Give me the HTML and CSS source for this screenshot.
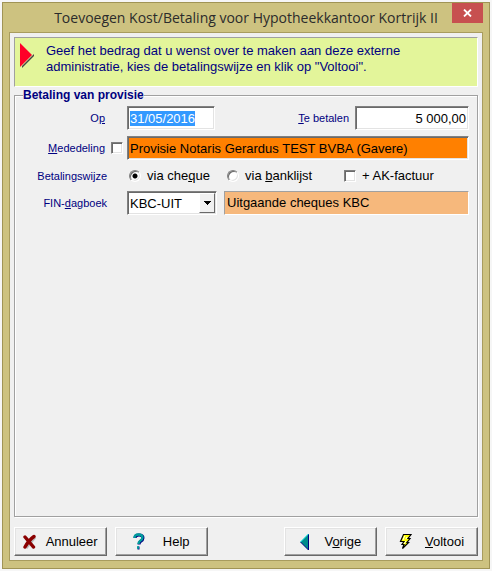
FILE: index.html
```html
<!DOCTYPE html>
<html lang="nl">

<head>
  <meta charset="UTF-8">
  <title>Toevoegen Kost/Betaling</title>
  <link rel="stylesheet" href="styles.css">
</head>

<body>
  <form class="window">
    <header class="titlebar">
      <h1>Toevoegen Kost/Betaling voor Hypotheekkantoor Kortrijk II</h1>
      <button type="button" class="close" aria-label="Sluiten">
        <svg width="9" height="8" viewBox="0 0 9 8"><path d="M1 0.5L8 7.5M8 0.5L1 7.5" stroke="#fff" stroke-width="1.8"/></svg>
      </button>
    </header>

    <main class="client">
      <div class="banner">
        <svg class="pointer" width="14" height="25" viewBox="0 0 14 25">
          <path d="M2 25L14 13V11L2 23z" fill="#444"/>
          <path d="M0 0L12 12L0 24z" fill="#ff0028"/>
        </svg>
        <p>Geef het bedrag dat u wenst over te maken aan deze externe administratie, kies de betalingswijze en klik op "Voltooi".</p>
      </div>

      <fieldset class="group">
        <legend>Betaling van provisie</legend>

        <div class="row">
          <label class="caption" for="datum">O<u>p</u></label>
          <input class="field date" type="text" id="datum" value="31/05/2016" autofocus>
          <label class="caption amount-label" for="bedrag"><u>T</u>e betalen</label>
          <input class="field amount" type="text" id="bedrag" value="5 000,00">
        </div>

        <div class="row">
          <label class="caption" for="metMededeling"><u>M</u>ededeling</label>
          <input class="check" type="checkbox" id="metMededeling">
          <input class="field message" type="text" value="Provisie Notaris Gerardus TEST BVBA (Gavere)" aria-label="Mededeling">
        </div>

        <div class="row options">
          <span class="caption wide">Betalingswijze</span>
          <label class="option cheque"><input class="radio" type="radio" name="wijze" checked><span>via che<u>q</u>ue</span></label>
          <label class="option bank"><input class="radio" type="radio" name="wijze"><span>via <u>b</u>anklijst</span></label>
          <label class="option"><input class="check" type="checkbox"><span>+ AK-factuur</span></label>
        </div>

        <div class="row">
          <label class="caption wide" for="dagboek">FIN-<u>d</u>agboek</label>
          <div class="combo">
            <select id="dagboek">
              <option>KBC-UIT</option>
            </select>
            <span class="combo-arrow">
              <svg width="7" height="4" viewBox="0 0 7 4" shape-rendering="crispEdges"><path d="M0 0H7V1H6V2H5V3H4V4H3V3H2V2H1V1H0z"/></svg>
            </span>
          </div>
          <output class="journal" for="dagboek">Uitgaande cheques KBC</output>
        </div>
      </fieldset>

      <footer class="buttons">
        <button type="button" class="btn">
          <svg width="14" height="16" viewBox="0 0 14 16">
            <path d="M3 4L11 14M12 3L3 14" stroke="#bbb" stroke-width="3" fill="none"/>
            <path d="M2 3L10.500 13M11 2.500Q6 6 2 13" stroke="#8b0000" stroke-width="3.400" stroke-linecap="round" fill="none"/>
          </svg>
          <span>Annuleer</span>
        </button>
        <button type="button" class="btn">
          <svg width="12" height="17" viewBox="0 0 12 17">
            <path d="M2 5Q2 2 6 2Q10 2 10 5Q10 7 7.500 8.500Q6 9.500 6 11.500M4.500 15H6.500" stroke="#000080" stroke-width="3" fill="none"/>
            <path d="M1.500 5Q1.500 1.500 5.500 1.500Q9.500 1.500 9.500 4.500Q9.500 6.500 7 8Q5.500 9 5.500 11M4 14.500H6" stroke="#009c9c" stroke-width="2.400" fill="none"/>
          </svg>
          <span>Help</span>
        </button>
        <button type="button" class="btn next">
          <svg width="10" height="16" viewBox="0 0 10 16">
            <path d="M8.500 0V16L0.500 8z" fill="#008b8b"/>
            <path d="M8.500 0V16L0.500 8" stroke="#000080" fill="none"/>
            <path d="M8.500 0L0.500 8" stroke="#00e0e0"/>
          </svg>
          <span>V<u>o</u>rige</span>
        </button>
        <button type="button" class="btn">
          <svg width="13" height="17" viewBox="0 0 13 17">
            <path d="M4.500 1.500H12L9 5.500H11L8 9.500H9.500L3.500 15.500L5 11.500H3L5 8.500H1.500z" fill="#ff0" stroke="#000" stroke-width="1.200"/>
            <path d="M5.500 3L4 7M8 4L7 6M7 8L5 11" stroke="#fff"/>
          </svg>
          <span><u>V</u>oltooi</span>
        </button>
      </footer>
    </main>
  </form>

  <script>
    const datum = document.getElementById('datum');
    datum.focus();
    datum.select();
  </script>
</body>

</html>
```

FILE: styles.css
```css
* {
  box-sizing: border-box;
}

body {
  margin: 0;
  min-height: 100vh;
  padding: 2px;
  display: flex;
  background: #f6f6f6;
  font-family: "Liberation Sans", Arial, sans-serif;
  font-size: 13px;
  color: #000;
}

input, select, button {
  font: inherit;
  color: inherit;
  margin: 0;
}

.window {
  flex: 1;
  min-width: 0;
  display: flex;
  flex-direction: column;
  padding: 0 6px 7px;
  border: 1px solid #a09455;
  background: #cdc280;
}

.titlebar {
  display: flex;
  align-items: flex-start;
  height: 29px;
}

.titlebar h1 {
  flex: 1;
  min-width: 0;
  margin: 0;
  padding-left: 31px;
  text-align: center;
  font-family: "Open Sans", "Noto Sans", sans-serif;
  font-size: 14px;
  font-weight: 400;
  line-height: 30px;
  white-space: nowrap;
  color: #2b2b2b;
}

.close {
  width: 31px;
  height: 20px;
  padding: 0;
  border: 0;
  background: #c75050;
  display: flex;
  align-items: center;
  justify-content: center;
}

.client {
  flex: 1;
  display: flex;
  flex-direction: column;
  padding: 4px;
  border: 1px solid #a89c5e;
  background: #f0f0f0;
}

.banner {
  display: flex;
  gap: 12px;
  height: 50px;
  padding: 5px;
  border: 1px solid;
  border-color: #a0a0a0 #fff #fff #a0a0a0;
  background: #e3f59a;
}

.pointer {
  flex: none;
}

.banner p {
  margin: 0;
  max-width: 380px;
  line-height: 16px;
  color: #000080;
}

.group {
  flex: 1;
  min-width: 0;
  margin: 1px 0 10px;
  padding: 4px 8px;
  border: 1px solid #a0a0a0;
  box-shadow: 1px 1px #fff, inset 1px 1px #fff;
  display: flex;
  flex-direction: column;
  gap: 6px;
}

.group legend {
  padding: 0;
  font-size: 12px;
  line-height: 14px;
  font-weight: bold;
  color: #000080;
  background: #f0f0f0;
}

.row {
  display: flex;
  align-items: center;
}

.row.options {
  height: 19px;
}

.caption {
  width: 82px;
  margin-right: 22px;
  font-size: 11px;
  text-align: right;
  color: #000080;
}

.caption.wide {
  width: 84px;
  margin-right: 20px;
}

.row .caption:has(+ .check) {
  margin-right: 6px;
}

.field, .journal {
  height: 24px;
  min-width: 0;
  padding: 0 2px;
  border: 1px solid;
  border-color: #808080 #fff #fff #808080;
  box-shadow: inset 1px 1px #696969, inset -1px -1px #e3e3e3;
  background: #fff;
  outline: none;
}

.field::selection {
  background: #3399ff;
  color: #fff;
}

.date {
  width: 88px;
}

.row .amount-label {
  flex: 1;
  margin-right: 6px;
}

.amount {
  width: 114px;
  text-align: right;
}

.message {
  flex: 1;
  margin-left: 4px;
  background: #ff8000;
}

.journal {
  flex: 1;
  margin-left: 7px;
  line-height: 22px;
  border-color: #a0a0a0 #fff #fff #a0a0a0;
  box-shadow: none;
  background: #f6b87c;
}

.check, .radio {
  appearance: none;
  width: 12px;
  height: 12px;
  flex: none;
  border: 1px solid;
  border-color: #808080 #fff #fff #808080;
  box-shadow: inset 1px 1px #696969, inset -1px -1px #e3e3e3;
  background: #fff;
}

.check:checked {
  background: #000 content-box;
  padding: 2px;
}

.radio {
  border-radius: 50%;
}

.radio:checked {
  background: radial-gradient(circle, #000 2px, #fff 3px);
}

.option {
  display: flex;
  align-items: center;
  gap: 6px;
}

.option.cheque {
  width: 100px;
  padding-left: 2px;
}

.option.bank {
  width: 117px;
}

.combo {
  position: relative;
  width: 90px;
  height: 24px;
}

.combo select {
  appearance: none;
  width: 100%;
  height: 100%;
  padding: 0 20px 0 2px;
  border: 1px solid;
  border-color: #808080 #fff #fff #808080;
  border-radius: 0;
  box-shadow: inset 1px 1px #696969, inset -1px -1px #e3e3e3;
  background: #fff;
}

.combo-arrow {
  position: absolute;
  top: 2px;
  right: 2px;
  bottom: 2px;
  width: 16px;
  display: flex;
  align-items: center;
  justify-content: center;
  border: 1px solid;
  border-color: #fff #696969 #696969 #fff;
  background: #f0f0f0;
  pointer-events: none;
}

.buttons {
  display: flex;
  gap: 8px;
}

.btn {
  width: 93px;
  height: 29px;
  padding: 0;
  border: 1px solid;
  border-color: #fff #696969 #696969 #fff;
  box-shadow: inset -1px -1px #a0a0a0, inset 1px 1px #e3e3e3;
  background: #f0f0f0;
  display: flex;
  align-items: center;
  justify-content: space-evenly;
}

.btn.next {
  margin-left: auto;
}
```
